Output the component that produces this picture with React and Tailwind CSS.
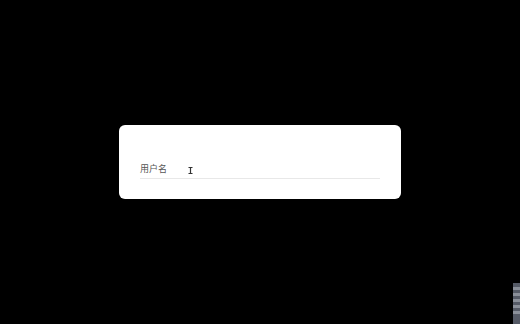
import React from "react";

export default function App() {
  return (
    <div className="relative flex h-[324px] w-[520px] items-center justify-center overflow-hidden bg-black font-['Noto_Sans_CJK_SC',sans-serif]">
      <div className="h-[74px] w-[282px] rounded-[6px] bg-white px-[21px] pt-[36px]">
        <div className="flex h-[18px] items-center border-b border-[#e8e8e8]">
          <span className="mb-[3px] w-[48px] text-[9px] leading-none text-[#555]">用户名</span>
          <svg width="5" height="7" viewBox="0 0 5 7" className="mt-[1px]">
            <path d="M0.5 0.5h4M0.5 6.5h4M2.5 0.5v6" stroke="#333" strokeWidth="1.2" fill="none" />
          </svg>
        </div>
      </div>
      <div className="absolute bottom-0 right-0 flex h-[41px] w-[7px] flex-col gap-[3px] bg-[#555a66] pt-[4px]">
        <div className="h-[3px] bg-[#8a8f99]" />
        <div className="h-[3px] bg-[#8a8f99]" />
        <div className="h-[3px] bg-[#8a8f99]" />
        <div className="h-[3px] bg-[#8a8f99]" />
        <div className="h-[3px] bg-[#8a8f99]" />
      </div>
    </div>
  );
}
